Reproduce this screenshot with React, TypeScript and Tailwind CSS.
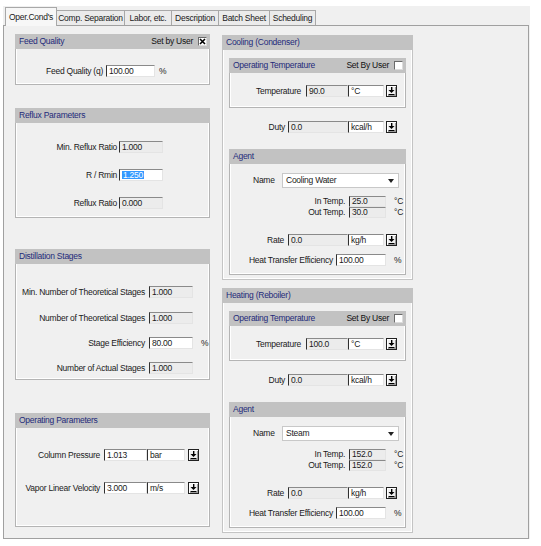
import React from "react";

const FONT = "font-['Liberation_Sans',Arial,sans-serif]";

// sunken edit box, gray when read-only
function Input({
  w,
  value,
  ro = false,
  sel = false,
  short = false,
  className = "",
}: {
  w: string;
  value: string;
  ro?: boolean;
  sel?: boolean;
  short?: boolean;
  className?: string;
}) {
  return (
    <div
      className={`${w} ${short ? "h-[11px]" : "h-[12px]"} flex items-center pl-[2px] leading-none overflow-hidden border border-t-[#8a8a8a] border-l-[#303030] border-r-[#e4e4e4] border-b-[#e4e4e4] ${
        ro ? "bg-[#ececec]" : "bg-white"
      } ${className}`}
    >
      {sel ? <span className="bg-[#3399ff] text-white px-[1px]">{value}</span> : value}
    </div>
  );
}

function DropBtn({ className = "" }: { className?: string }) {
  return (
    <div
      className={`w-[11px] h-[12px] border border-[#202020] bg-[#f0f0f0] flex items-center justify-center shadow-[inset_1px_1px_0_#fff,inset_-1px_-1px_0_#9a9a9a] ${className}`}
    >
      <svg width="7" height="8" viewBox="0 0 7 8">
        <rect x="3" y="0" width="1.4" height="3.5" fill="#000" />
        <polygon points="0.5,3 6.5,3 3.5,6" fill="#000" />
        <rect x="0.5" y="7" width="6" height="1" fill="#000" />
      </svg>
    </div>
  );
}

function Check({ checked = false }: { checked?: boolean }) {
  return (
    <div className="w-[9px] h-[9px] bg-white border border-t-[#6a6a6a] border-l-[#6a6a6a] border-r-[#dcdcdc] border-b-[#dcdcdc] flex items-center justify-center">
      {checked && (
        <svg width="7" height="7" viewBox="0 0 7 7">
          <path d="M1 1 L6 6 M6 1 L1 6" stroke="#000" strokeWidth="1.6" />
        </svg>
      )}
    </div>
  );
}

function Header({ title, right }: { title: string; right?: React.ReactNode }) {
  return (
    <div className="h-[15px] bg-[#c2c2c2] flex items-center justify-between pl-[4px] pr-[3px]">
      <span className="text-[#1e2a7a]">{title}</span>
      {right}
    </div>
  );
}

function SetByUser({ label, checked }: { label: string; checked?: boolean }) {
  return (
    <div className="flex items-center gap-[5px] text-[#111]">
      <span>{label}</span>
      <Check checked={checked} />
    </div>
  );
}

function Panel({
  title,
  right,
  h,
  className = "",
  children,
}: {
  title: string;
  right?: React.ReactNode;
  h: string;
  className?: string;
  children: React.ReactNode;
}) {
  return (
    <div className={`${h} flex flex-col ${className}`}>
      <Header title={title} right={right} />
      <div className="flex-1 border border-t-0 border-[#b4b4b4] shadow-[inset_1px_0_0_#fff,inset_-1px_-1px_0_#fff]">
        {children}
      </div>
    </div>
  );
}

function Combo({ value }: { value: string }) {
  return (
    <div className="w-[117px] h-[15px] bg-white border border-[#c8c8c8] flex items-center justify-between pl-[3px] pr-[4px]">
      <span>{value}</span>
      <svg width="6" height="4" viewBox="0 0 6 4">
        <polygon points="0,0 6,0 3,4" fill="#222" />
      </svg>
    </div>
  );
}

function Exchanger({
  title,
  temp,
  agent,
  inT,
  outT,
  className = "",
}: {
  title: string;
  temp: string;
  agent: string;
  inT: string;
  outT: string;
  className?: string;
}) {
  return (
    <div className={`flex flex-col ${className}`}>
      <Header title={title} />
      <div className="border border-t-0 border-[#c4c4c4] shadow-[inset_1px_0_0_#fff,inset_-1px_-1px_0_#fff] px-[6px] pt-[8px] pb-[4px]">
        <Panel title="Operating Temperature" right={<SetByUser label="Set By User" />} h="h-[50px]">
          <div className="flex items-center mt-[12px]">
            <span className="w-[71px] text-right">Temperature</span>
            <Input w="w-[42px]" value={temp} ro className="ml-[5px]" />
            <Input w="w-[36px]" value="°C" />
            <DropBtn className="ml-[2px]" />
          </div>
        </Panel>
        <div className="flex items-center mt-[13px]">
          <span className="w-[56px] text-right">Duty</span>
          <Input w="w-[60px]" value="0.0" ro className="ml-[3px]" />
          <Input w="w-[36px]" value="kcal/h" />
          <DropBtn className="ml-[2px]" />
        </div>
        <Panel title="Agent" h="h-[126px]" className="mt-[16px]">
          <div className="flex items-center mt-[9px]">
            <span className="ml-[23px] w-[29px]">Name</span>
            <Combo value={agent} />
          </div>
          <div className="flex items-center mt-[8px]">
            <span className="w-[115px] text-right">In Temp.</span>
            <Input w="w-[37px]" value={inT} ro short className="ml-[4px]" />
            <span className="ml-[8px]">°C</span>
          </div>
          <div className="flex items-center">
            <span className="w-[115px] text-right">Out Temp.</span>
            <Input w="w-[37px]" value={outT} ro short className="ml-[4px]" />
            <span className="ml-[8px]">°C</span>
          </div>
          <div className="flex items-center mt-[16px]">
            <span className="w-[54px] text-right">Rate</span>
            <Input w="w-[60px]" value="0.0" ro className="ml-[4px]" />
            <Input w="w-[36px]" value="kg/h" />
            <DropBtn className="ml-[2px]" />
          </div>
          <div className="flex items-center mt-[8px]">
            <span className="w-[103px] text-right">Heat Transfer Efficiency</span>
            <Input w="w-[50px]" value="100.00" className="ml-[3px]" />
            <span className="ml-[8px]">%</span>
          </div>
        </Panel>
      </div>
    </div>
  );
}

const TABS = [
  { label: "Oper.Cond's", w: "w-[52px]", active: true },
  { label: "Comp. Separation", w: "w-[69px]" },
  { label: "Labor, etc.", w: "w-[48px]" },
  { label: "Description", w: "w-[48px]" },
  { label: "Batch Sheet", w: "w-[52px]" },
  { label: "Scheduling", w: "w-[47px]" },
];

export default function App() {
  return (
    <div
      className={`w-[541px] h-[546px] bg-white text-[8.5px] leading-[11px] tracking-[-0.25px] whitespace-nowrap text-[#1a1a1a] ${FONT}`}
    >
      <div className="ml-[3px] pt-[6px] w-[527px]">
        <div className="bg-[#f0f0f0]">
          {/* tab strip */}
          <div className="h-[19px] flex items-end pl-[2px]">
            {TABS.map(t => (
              <div
                key={t.label}
                className={`${t.w} flex items-center justify-center border border-[#a8a8a8] ${
                  t.active
                    ? "h-[19px] bg-[#f7f7f7] border-b-0 relative top-[1px] z-10"
                    : "h-[15px] bg-[#ebebeb] border-b-0 -ml-px"
                }`}
              >
                {t.label}
              </div>
            ))}
          </div>

          {/* page */}
          <div className="h-[514px] w-[526px] border border-[#a0a0a0] bg-[#f0f0f0] flex pl-[11px] pt-[8px]">
            {/* left column */}
            <div className="w-[195px] flex flex-col">
              <Panel title="Feed Quality" right={<SetByUser label="Set by User" checked />} h="h-[51px]">
                <div className="flex items-center mt-[16px]">
                  <span className="w-[87px] text-right">Feed Quality (q)</span>
                  <Input w="w-[49px]" value="100.00" className="ml-[3px]" />
                  <span className="ml-[4px]">%</span>
                </div>
              </Panel>

              <Panel title="Reflux Parameters" h="h-[110px]" className="mt-[23px]">
                <div className="flex items-center mt-[18px]">
                  <span className="w-[101px] text-right">Min. Reflux Ratio</span>
                  <Input w="w-[44px]" value="1.000" ro className="ml-[2px]" />
                </div>
                <div className="flex items-center mt-[16px]">
                  <span className="w-[101px] text-right">R / Rmin</span>
                  <Input w="w-[44px]" value="1.250" sel className="ml-[2px]" />
                </div>
                <div className="flex items-center mt-[16px]">
                  <span className="w-[101px] text-right">Reflux Ratio</span>
                  <Input w="w-[44px]" value="0.000" ro className="ml-[2px]" />
                </div>
              </Panel>

              <Panel title="Distillation Stages" h="h-[131px]" className="mt-[31px]">
                <div className="flex items-center mt-[22px]">
                  <span className="w-[129px] text-right">Min. Number of Theoretical Stages</span>
                  <Input w="w-[44px]" value="1.000" ro className="ml-[4px]" />
                </div>
                <div className="flex items-center mt-[14px]">
                  <span className="w-[129px] text-right">Number of Theoretical Stages</span>
                  <Input w="w-[44px]" value="1.000" ro className="ml-[4px]" />
                </div>
                <div className="flex items-center mt-[13px]">
                  <span className="w-[129px] text-right">Stage Efficiency</span>
                  <Input w="w-[44px]" value="80.00" className="ml-[4px]" />
                  <span className="ml-[8px]">%</span>
                </div>
                <div className="flex items-center mt-[13px]">
                  <span className="w-[129px] text-right">Number of Actual Stages</span>
                  <Input w="w-[44px]" value="1.000" ro className="ml-[4px]" />
                </div>
              </Panel>

              <Panel title="Operating Parameters" h="h-[114px]" className="mt-[33px]">
                <div className="flex items-center mt-[21px]">
                  <span className="w-[84px] text-right">Column Pressure</span>
                  <Input w="w-[43px]" value="1.013" className="ml-[4px]" />
                  <Input w="w-[38px]" value="bar" />
                  <DropBtn className="ml-[3px]" />
                </div>
                <div className="flex items-center mt-[21px]">
                  <span className="w-[84px] text-right">Vapor Linear Velocity</span>
                  <Input w="w-[43px]" value="3.000" className="ml-[4px]" />
                  <Input w="w-[38px]" value="m/s" />
                  <DropBtn className="ml-[3px]" />
                </div>
              </Panel>
            </div>

            {/* right column */}
            <div className="w-[191px] ml-[12px] flex flex-col pt-[1px]">
              <Exchanger title="Cooling (Condenser)" temp="90.0" agent="Cooling Water" inT="25.0" outT="30.0" />
              <Exchanger
                title="Heating (Reboiler)"
                temp="100.0"
                agent="Steam"
                inT="152.0"
                outT="152.0"
                className="mt-[8px]"
              />
            </div>
          </div>
        </div>
      </div>
    </div>
  );
}
